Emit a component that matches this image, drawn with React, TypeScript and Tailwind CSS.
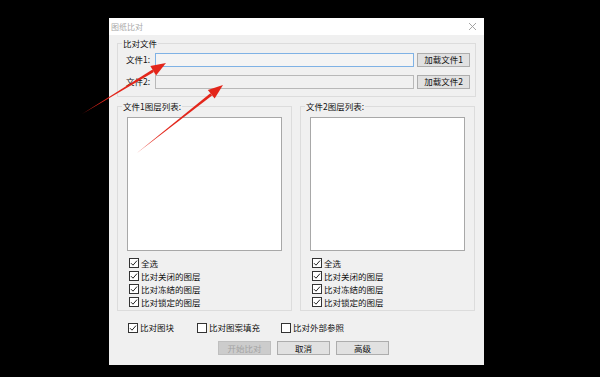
import React from "react";

const font = { fontFamily: '"Microsoft YaHei", "Noto Sans CJK SC", sans-serif' };

function Check({ checked, label }: { checked?: boolean; label: string }) {
  return (
    <div className="flex items-center h-[13px] gap-[2px]">
      <span className="w-[10px] h-[10px] border border-[#333] bg-white flex items-center justify-center">
        {checked && (
          <svg width="8" height="8" viewBox="0 0 8 8">
            <path d="M1 4.2 L3 6.2 L7 1.6" fill="none" stroke="#222" strokeWidth="1" />
          </svg>
        )}
      </span>
      <span className="leading-none">{label}</span>
    </div>
  );
}

function Btn({ label, disabled }: { label: string; disabled?: boolean }) {
  return (
    <div
      className={
        disabled
          ? "w-[53px] h-[14px] border border-[#bfbfbf] bg-[#cccccc] text-[#a3a3a3] flex items-center justify-center leading-none"
          : "w-[53px] h-[14px] border border-[#adadad] bg-[#e1e1e1] flex items-center justify-center leading-none"
      }
    >
      {label}
    </div>
  );
}

function LayerGroup({ title }: { title: string }) {
  return (
    <fieldset className="w-[175px] h-[209px] border border-[#dcdcdc]">
      <legend className="ml-[4px] px-[1px] leading-none text-[8.5px]">{title}</legend>
      <div className="px-[9px] pb-[6px]">
        <div className="mt-[6px] h-[134px] border border-[#a8a8a8] bg-white" />
        <div className="mt-[6px] pl-[2px] flex flex-col">
          <Check checked label="全选" />
          <Check checked label="比对关闭的图层" />
          <Check checked label="比对冻结的图层" />
          <Check checked label="比对锁定的图层" />
        </div>
      </div>
    </fieldset>
  );
}

function Arrow({ x1, y1, x2, y2 }: { x1: number; y1: number; x2: number; y2: number }) {
  const dx = x2 - x1;
  const dy = y2 - y1;
  const len = Math.hypot(dx, dy);
  const ux = dx / len;
  const uy = dy / len;
  const hl = 15;
  const hw = 5.5;
  const bx = x2 - ux * hl;
  const by = y2 - uy * hl;
  const px = -uy;
  const py = ux;
  const head = `${x2},${y2} ${bx + px * hw},${by + py * hw} ${bx - px * hw},${by - py * hw}`;
  const tail = `${x1},${y1} ${bx + px * 1.4},${by + py * 1.4} ${bx - px * 1.4},${by - py * 1.4}`;
  return (
    <g fill="#e3261b">
      <polygon points={tail} />
      <polygon points={head} />
    </g>
  );
}

export default function App() {
  return (
    <div className="relative w-[600px] h-[377px] bg-black overflow-hidden" style={font}>
      <div className="pt-[18px] pl-[109px]">
        <div className="w-[375px] h-[347px] bg-[#f0f0f0] flex flex-col text-[8.5px] text-[#111]">
          <div className="h-[17px] bg-white flex items-center justify-between pl-[2px] pr-[7px]">
            <span className="text-[8px] text-[#a8a8a8] leading-none">图纸比对</span>
            <svg width="9" height="9" viewBox="0 0 9 9">
              <path d="M1 1 L8 8 M8 1 L1 8" stroke="#9a9a9a" strokeWidth="0.9" />
            </svg>
          </div>
          <div className="px-[8px] pt-[4px] flex flex-col">
            <fieldset className="w-[359px] h-[58px] border border-[#dcdcdc]">
              <legend className="ml-[4px] px-[1px] leading-none text-[8.5px]">比对文件</legend>
              <div className="pl-[8px] pr-[5px]">
                <div className="flex items-center h-[14px] mt-[5px]">
                  <span className="w-[29px] leading-none">文件1:</span>
                  <div className="w-[259px] h-[14px] border border-[#7fb2e5] bg-[#f4f4f4]" />
                  <div className="ml-[3px]">
                    <Btn label="加载文件1" />
                  </div>
                </div>
                <div className="flex items-center h-[14px] mt-[8px]">
                  <span className="w-[29px] leading-none">文件2:</span>
                  <div className="w-[259px] h-[14px] border border-[#b8b8b8] bg-[#f0f0f0]" />
                  <div className="ml-[3px]">
                    <Btn label="加载文件2" />
                  </div>
                </div>
              </div>
            </fieldset>
            <div className="flex gap-[8px] mt-[5px]">
              <LayerGroup title="文件1图层列表:" />
              <LayerGroup title="文件2图层列表:" />
            </div>
            <div className="flex items-center mt-[10px] pl-[11px]">
              <div className="w-[69px]">
                <Check checked label="比对图块" />
              </div>
              <div className="w-[84px]">
                <Check label="比对图案填充" />
              </div>
              <Check label="比对外部参照" />
            </div>
            <div className="flex gap-[6px] mt-[7px] pl-[101px]">
              <Btn label="开始比对" disabled />
              <Btn label="取消" />
              <Btn label="高级" />
            </div>
          </div>
        </div>
      </div>
      <svg className="absolute inset-0 pointer-events-none" width="600" height="377">
        <Arrow x1={82} y1={114} x2={166} y2={63} />
        <Arrow x1={137} y1={153} x2={223} y2={85} />
      </svg>
    </div>
  );
}
